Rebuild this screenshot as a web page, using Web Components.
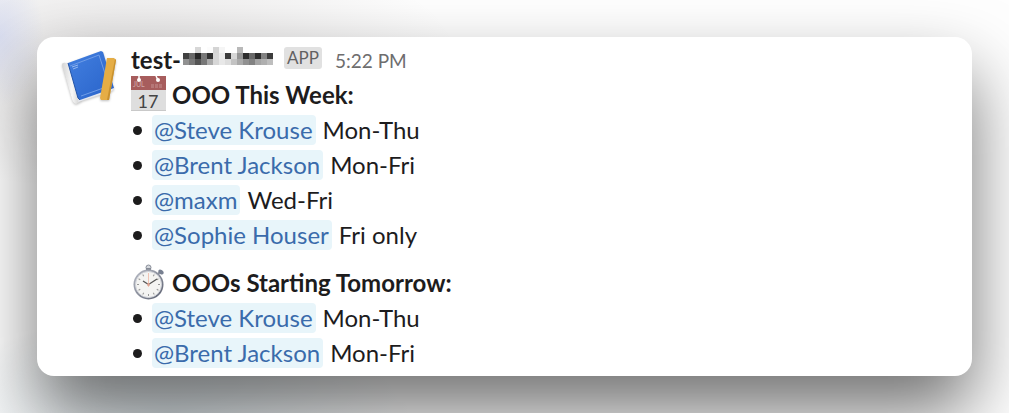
<!DOCTYPE html>
<html lang="en">
<head>
<meta charset="utf-8">
<title>Out of office</title>
<style>
html{min-height:100%;background:#fefefe}
body{margin:0;font-family:Lato,"Noto Sans",sans-serif;color:#1d1c1d;overflow:hidden}
</style>
</head>
<body>
<ooo-stage>
  <chat-message name="test-" time="5:22 PM">
    <ooo-section icon="calendar" heading="OOO This Week:">
      <ooo-entry who="@Steve Krouse">Mon-Thu</ooo-entry>
      <ooo-entry who="@Brent Jackson">Mon-Fri</ooo-entry>
      <ooo-entry who="@maxm">Wed-Fri</ooo-entry>
      <ooo-entry who="@Sophie Houser">Fri only</ooo-entry>
    </ooo-section>
    <ooo-section icon="stopwatch" heading="OOOs Starting Tomorrow:">
      <ooo-entry who="@Steve Krouse">Mon-Thu</ooo-entry>
      <ooo-entry who="@Brent Jackson">Mon-Fri</ooo-entry>
    </ooo-section>
  </chat-message>
</ooo-stage>
<script>
class OooStage extends HTMLElement{
  connectedCallback(){
    this.attachShadow({mode:'open'}).innerHTML=`<style>
      :host{display:block;padding:37px;min-height:100vh;box-sizing:border-box;
        background:radial-gradient(ellipse 44px 70px at 0 36px,rgba(190,200,240,.45),transparent),
          radial-gradient(ellipse 340px 130px at 120px 60px,rgba(60,50,50,.13),transparent),
          radial-gradient(ellipse 240px 100px at 170px 100%,rgba(40,90,115,.16),transparent)}
    </style><slot></slot>`;
  }
}
class ChatMessage extends HTMLElement{
  connectedCallback(){
    this.attachShadow({mode:'open'}).innerHTML=`<style>
      :host{display:flex;gap:12px;padding:5px 24px 6px;border-radius:17px;background:#fff;
        box-shadow:0 36px 70px rgba(0,0,0,.55)}
      bot-avatar{margin-top:6px}
      .body{display:flex;flex-direction:column;gap:13px;flex:1;min-width:0}
      header{display:flex;align-items:center;height:35px;margin-bottom:-13px}
      strong{font-size:24px;line-height:35px;font-weight:700}
      masked-name{margin-left:2px}
      .badge{margin:0 13px 3px 10px;padding:0 3px;border-radius:3px;background:#e1e1e1;color:#616061;font-size:17px;line-height:22px}
      time{font-size:19px;line-height:35px;color:#6e6d6e;padding-top:1px}
    </style>
    <bot-avatar></bot-avatar>
    <div class="body">
      <header><strong>${this.getAttribute('name')}</strong><masked-name></masked-name><span class="badge">APP</span><time>${this.getAttribute('time')}</time></header>
      <slot></slot>
    </div>`;
  }
}
class MaskedName extends HTMLElement{
  connectedCallback(){
    const rows=[
      [255,255,215,255,252,212,245,255,255,185,255,255,255,255,255],
      [65,105,40,120,50,215,235,60,215,150,45,105,45,130,60],
      [145,120,85,120,170,215,232,222,195,170,145,130,165,175,190]];
    const cells=rows.map((r,y)=>r.map((v,x)=>`<rect x="${x*6}" y="${y*6}" width="6" height="6" fill="rgb(${v},${v},${v})"/>`).join('')).join('');
    this.attachShadow({mode:'open'}).innerHTML=`<style>:host{display:block;height:18px;margin-bottom:7px}svg{display:block}</style>
      <svg width="91" height="18" shape-rendering="crispEdges" aria-hidden="true">${cells}</svg>`;
  }
}
class BotAvatar extends HTMLElement{
  connectedCallback(){
    this.attachShadow({mode:'open'}).innerHTML=`<style>:host{display:block;width:58px;height:58px;flex:none}svg{display:block;filter:drop-shadow(0 1px 1px rgba(0,0,0,.25))}</style>
    <svg width="58" height="58" viewBox="0 0 58 58" aria-hidden="true">
      <defs><linearGradient id="b" x1="0" y1="0" x2="1" y2="1"><stop offset="0" stop-color="#4380e0"/><stop offset="1" stop-color="#2862c9"/></linearGradient>
      <linearGradient id="w"><stop offset="0" stop-color="#d4d4d4"/><stop offset=".5" stop-color="#f8f8f8"/><stop offset="1" stop-color="#c7c7c7"/></linearGradient></defs>
      <path d="M1 17Q1 14 5 15L9 16L21 53L15 56Q12 55 11 51Z" fill="url(#w)"/>
      <path d="M17 54L51 43L53 41L45 30L18 50Z" fill="#e5e8ef"/>
      <path d="M7 15L40 3L42 4L53 40L19 52L17 50Z" fill="url(#b)"/>
      <path d="M7 15L17 50L19 52" fill="none" stroke="#2253a8"/>
      <path d="M9 18L38 7L48 38L20 48" fill="none" stroke="#6f9de8"/>
      <path d="M11 19L17 17M12 21L17 19" stroke="#94b7ee"/>
      <path d="M46 10H53L55 12L48 52H40L39 50Z" fill="#e5ad45"/>
      <path d="M54 11L55 12L48 52H46Z" fill="#c8912f"/>
    </svg>`;
  }
}
class EmojiIcon extends HTMLElement{
  connectedCallback(){
    const ticks=Array.from({length:12},(_,i)=>`<path d="M17.5 9V11" stroke="#989898" transform="rotate(${i*30} 17.5 20.5)"/>`).join('');
    const art=this.getAttribute('kind')==='calendar'?
      `<rect width="35" height="35" fill="#dedede"/><rect width="35" height="14" fill="#a75d5d"/><path d="M0 34.5H35" stroke="#c9c9c9"/>
       <circle cx="8" cy="4" r="2" fill="#fff"/><path d="M8 0V4M25 0L27 4" stroke="#fff" stroke-width="1.5"/><circle cx="27" cy="4" r="2" fill="#fff"/>
       <path d="M20 10H31" stroke="#b67777" stroke-width="4" stroke-dasharray="3 1"/>
       <text x="2" y="11" font-size="7" font-weight="400" fill="#d3abab">JUL</text><text x="17" y="32" text-anchor="middle" font-size="18" font-weight="400" fill="#454545">17</text>`:
      `<defs><linearGradient id="m" x1="0" y1="0" x2="1" y2="1"><stop offset="0" stop-color="#b9bdc7"/><stop offset="1" stop-color="#5b6070"/></linearGradient></defs>
       <circle cx="17.5" cy="3.5" r="2.5" fill="#d4d7dc" stroke="#898e99"/><rect x="15" y="4" width="5" height="4" fill="#858a95"/>
       <path d="M26 11L30 7" stroke="#868c98" stroke-width="2"/><ellipse cx="30" cy="8" rx="3" ry="2" fill="#777f90" transform="rotate(35 30 8)"/>
       <circle cx="17.5" cy="20.5" r="15" fill="url(#m)"/><circle cx="17.5" cy="20.5" r="13" fill="#f4f4f2" stroke="#d2d4da"/>
       ${ticks}<path d="M12 17L17.5 20.5L26 15" fill="none" stroke="#555" stroke-width="1.3"/><path d="M17.5 9V23" stroke="#f0c4b4"/><circle cx="17.5" cy="20.5" r="1.5" fill="#dda392"/>`;
    this.attachShadow({mode:'open'}).innerHTML=`<style>:host{display:block;width:35px;height:36px;flex:none}svg{display:block}</style>
      <svg width="35" height="36" viewBox="0 0 35 36" aria-hidden="true">${art}</svg>`;
  }
}
class OooSection extends HTMLElement{
  connectedCallback(){
    this.attachShadow({mode:'open'}).innerHTML=`<style>
      :host{display:block}
      h2{display:flex;align-items:center;gap:6px;height:35px;margin:0;font-size:24px;line-height:35px;font-weight:700}
      emoji-icon{margin-bottom:2px}
    </style><h2><emoji-icon kind="${this.getAttribute('icon')}"></emoji-icon>${this.getAttribute('heading')}</h2>
    <div role="list"><slot></slot></div>`;
  }
}
class OooEntry extends HTMLElement{
  connectedCallback(){
    this.setAttribute('role','listitem');
    this.attachShadow({mode:'open'}).innerHTML=`<style>
      :host{display:flex;align-items:center;height:35px;font-size:24px;line-height:35px}
      i{width:9px;height:9px;border-radius:50%;background:#1d1c1d;margin:2px 10px 0 2px}
      a{color:#3a6bab;background:#e8f5fa;border-radius:4px;padding:0 3px 0 2px;line-height:30px;margin-right:7px;text-decoration:none}
    </style><i></i><a href="#">${this.getAttribute('who')}</a><slot></slot>`;
  }
}
customElements.define('ooo-stage',OooStage);
customElements.define('chat-message',ChatMessage);
customElements.define('masked-name',MaskedName);
customElements.define('bot-avatar',BotAvatar);
customElements.define('emoji-icon',EmojiIcon);
customElements.define('ooo-section',OooSection);
customElements.define('ooo-entry',OooEntry);
</script>
</body>
</html>
